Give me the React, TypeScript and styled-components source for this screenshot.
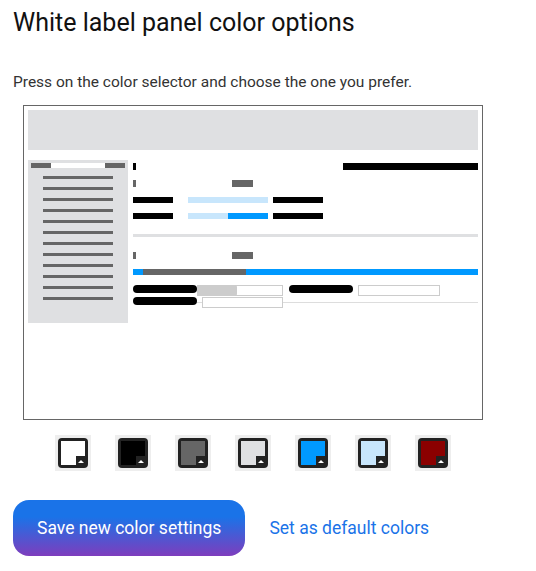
import styled, { createGlobalStyle } from "styled-components";

const GlobalStyle = createGlobalStyle`
  body {
    margin: 0;
    background: #fff;
    font-family: Roboto, "Liberation Sans", Arial, sans-serif;
  }
`;

const Page = styled.div`
  padding: 8px 13px 0;
`;

const Title = styled.h1`
  margin: 0;
  font-size: 25px;
  line-height: 30px;
  font-weight: 400;
  color: #111;
`;

const Hint = styled.p`
  margin: 34px 0 0;
  font-size: 15.5px;
  line-height: 20px;
  color: #333;
`;

const Frame = styled.div`
  box-sizing: border-box;
  width: 460px;
  height: 315px;
  margin: 13px 0 0 10px;
  padding: 4px;
  border: 1px solid #666;
`;

const Header = styled.div`
  width: 450px;
  height: 40px;
  background: #dfe0e2;
`;

const Body = styled.div`
  display: flex;
  gap: 5px;
  margin-top: 10px;
`;

const Sidebar = styled.div`
  box-sizing: border-box;
  width: 100px;
  height: 163px;
  padding: 3px 3px 0;
  background: #dfe0e2;
  display: flex;
  flex-direction: column;
  align-items: center;
  gap: 8px;
`;

const SideTop = styled.div`
  display: flex;
  width: 100%;
  height: 5px;
`;

const Block = styled.div<{ $w: number; $h?: number; $c: string; $ml?: number }>`
  flex: none;
  width: ${(p) => p.$w}px;
  height: ${(p) => p.$h ?? 6}px;
  background: ${(p) => p.$c};
  margin-left: ${(p) => p.$ml ?? 0}px;
`;

const SideLine = styled.div`
  width: 70px;
  height: 3px;
  background: #666;
`;

const Main = styled.div`
  width: 345px;
  display: flex;
  flex-direction: column;
`;

const Row = styled.div<{ $mt: number; $between?: boolean }>`
  display: flex;
  align-items: flex-start;
  margin-top: ${(p) => p.$mt}px;
  justify-content: ${(p) => (p.$between ? "space-between" : "flex-start")};
`;

const Separator = styled.div<{ $mt: number }>`
  height: 3px;
  background: #dfe0e2;
  margin-top: ${(p) => p.$mt}px;
`;

const Progress = styled.div`
  display: flex;
  height: 6px;
  margin-top: 10px;
  background: #0099ff;
`;

const Pill = styled.div<{ $ml?: number }>`
  flex: none;
  width: 64px;
  height: 8px;
  border-radius: 4px;
  background: #000;
  margin-left: ${(p) => p.$ml ?? 0}px;
`;

const FieldBox = styled.div<{ $w: number; $ml?: number }>`
  box-sizing: border-box;
  flex: none;
  width: ${(p) => p.$w}px;
  height: 11px;
  border: 1px solid #ccc;
  background: #fff;
  margin-left: ${(p) => p.$ml ?? 0}px;
  position: relative;
`;

const FieldFill = styled.div`
  position: absolute;
  left: -1px;
  top: -1px;
  width: 40px;
  height: 11px;
  border-radius: 2px;
  background: #ccc;
`;

const LineTrack = styled.div`
  flex: 1;
  display: flex;
  height: 11px;
  background: linear-gradient(#ddd, #ddd) no-repeat 0 5px / 100% 1px;
`;

const Swatches = styled.div`
  width: 460px;
  margin: 15px 0 0 10px;
  display: flex;
  justify-content: center;
  gap: 24px;
`;

const Swatch = styled.div`
  width: 36px;
  height: 36px;
  background: #eee;
  display: flex;
  align-items: center;
  justify-content: center;
`;

const SwatchFrame = styled.div`
  box-sizing: border-box;
  width: 30px;
  height: 30px;
  padding: 3px;
  border-radius: 4px;
  background: #222;
`;

const SwatchFill = styled.div<{ $c: string }>`
  position: relative;
  width: 24px;
  height: 24px;
  background: ${(p) => p.$c};
`;

const Notch = styled.div`
  position: absolute;
  right: 0;
  bottom: 0;
  width: 9px;
  height: 9px;
  background: #222;
  &::after {
    content: "";
    position: absolute;
    left: 2px;
    bottom: 2px;
    border-left: 3px solid transparent;
    border-right: 3px solid transparent;
    border-bottom: 3px solid #fff;
  }
`;

const Actions = styled.div`
  display: flex;
  align-items: center;
  gap: 24px;
  margin-top: 29px;
`;

const SaveButton = styled.button`
  height: 56px;
  padding: 0 24px;
  border: none;
  border-radius: 16px;
  background: linear-gradient(#1a73e8 30%, #7e3dbd);
  color: #fff;
  font-family: Roboto, "Liberation Sans", Arial, sans-serif;
  font-size: 17.5px;
  cursor: pointer;
`;

const LinkButton = styled.button`
  padding: 0;
  border: none;
  background: none;
  color: #1a73e8;
  font-family: Roboto, "Liberation Sans", Arial, sans-serif;
  font-size: 17.5px;
  cursor: pointer;
`;

const colors = ["#ffffff", "#000000", "#666666", "#dfe0e2", "#0099ff", "#c8e6fc", "#8b0000"];

export default function App() {
  return (
    <>
      <GlobalStyle />
      <Page>
        <Title>White label panel color options</Title>
        <Hint>Press on the color selector and choose the one you prefer.</Hint>
        <Frame>
          <Header />
          <Body>
            <Sidebar>
              <SideTop>
                <Block $w={20} $h={5} $c="#666" />
                <Block $w={54} $h={5} $c="#fff" />
                <Block $w={20} $h={5} $c="#666" />
              </SideTop>
              {Array.from({ length: 12 }).map((_, i) => (
                <SideLine key={i} />
              ))}
            </Sidebar>
            <Main>
              <Row $mt={3} $between>
                <Block $w={3} $h={7} $c="#000" />
                <Block $w={135} $h={7} $c="#000" />
              </Row>
              <Row $mt={10}>
                <Block $w={3} $h={7} $c="#666" />
                <Block $w={21} $h={7} $c="#666" $ml={96} />
              </Row>
              <Row $mt={10}>
                <Block $w={40} $c="#000" />
                <Block $w={80} $c="#c8e6fc" $ml={15} />
                <Block $w={50} $c="#000" $ml={5} />
              </Row>
              <Row $mt={10}>
                <Block $w={40} $c="#000" />
                <Block $w={40} $c="#c8e6fc" $ml={15} />
                <Block $w={40} $c="#0099ff" />
                <Block $w={50} $c="#000" $ml={5} />
              </Row>
              <Separator $mt={15} />
              <Row $mt={15}>
                <Block $w={3} $h={7} $c="#666" />
                <Block $w={21} $h={7} $c="#666" $ml={96} />
              </Row>
              <Progress>
                <Block $w={103} $c="#666" $ml={10} />
              </Progress>
              <Row $mt={10}>
                <Pill />
                <FieldBox $w={86}>
                  <FieldFill />
                </FieldBox>
                <Pill $ml={6} />
                <FieldBox $w={82} $ml={5} />
              </Row>
              <Row $mt={1}>
                <Pill />
                <LineTrack>
                  <FieldBox $w={81} $ml={5} />
                </LineTrack>
              </Row>
            </Main>
          </Body>
        </Frame>
        <Swatches>
          {colors.map((c) => (
            <Swatch key={c}>
              <SwatchFrame>
                <SwatchFill $c={c}>
                  <Notch />
                </SwatchFill>
              </SwatchFrame>
            </Swatch>
          ))}
        </Swatches>
        <Actions>
          <SaveButton>Save new color settings</SaveButton>
          <LinkButton>Set as default colors</LinkButton>
        </Actions>
      </Page>
    </>
  );
}
